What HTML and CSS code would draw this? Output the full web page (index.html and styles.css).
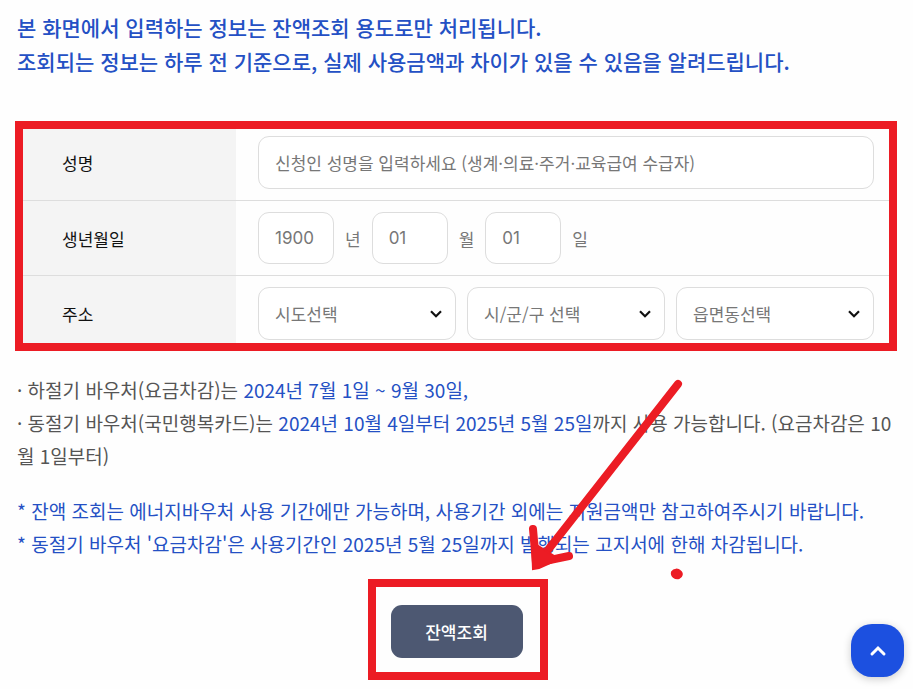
FILE: index.html
```
<!DOCTYPE html>
<html lang="ko">
<head>
    <meta charset="UTF-8">
    <meta name="viewport" content="width=device-width, initial-scale=1.0">
    <title>에너지바우처 잔액조회</title>
    <link rel="stylesheet" href="styles.css">
</head>
<body>
    <main>
        <p class="intro">
            본 화면에서 입력하는 정보는 잔액조회 용도로만 처리됩니다.<br>
            조회되는 정보는 하루 전 기준으로, 실제 사용금액과 차이가 있을 수 있음을 알려드립니다.
        </p>
        <form id="balance-form">
            <div class="mark form-mark">
                <table class="form-table">
                    <tbody>
                        <tr>
                            <th scope="row"><label for="name">성명</label></th>
                            <td><input type="text" id="name" placeholder="신청인 성명을 입력하세요 (생계·의료·주거·교육급여 수급자)"></td>
                        </tr>
                        <tr>
                            <th scope="row">생년월일</th>
                            <td>
                                <div class="birth">
                                    <input type="text" id="year" placeholder="1900">
                                    <label for="year">년</label>
                                    <input type="text" id="month" placeholder="01">
                                    <label for="month">월</label>
                                    <input type="text" id="day" placeholder="01">
                                    <label for="day">일</label>
                                </div>
                            </td>
                        </tr>
                        <tr>
                            <th scope="row">주소</th>
                            <td>
                                <div class="address">
                                    <div class="select-box">
                                        <select aria-label="시도"><option>시도선택</option></select>
                                        <svg viewBox="0 0 12 8"><path d="M1 1.3 6 6.3l5-5"/></svg>
                                    </div>
                                    <div class="select-box">
                                        <select aria-label="시/군/구"><option>시/군/구 선택</option></select>
                                        <svg viewBox="0 0 12 8"><path d="M1 1.3 6 6.3l5-5"/></svg>
                                    </div>
                                    <div class="select-box">
                                        <select aria-label="읍면동"><option>읍면동선택</option></select>
                                        <svg viewBox="0 0 12 8"><path d="M1 1.3 6 6.3l5-5"/></svg>
                                    </div>
                                </div>
                            </td>
                        </tr>
                    </tbody>
                </table>
            </div>
            <p class="note">
                · 하절기 바우처(요금차감)는 <span class="blue">2024년 7월 1일 ~ 9월 30일,</span><br>
                · 동절기 바우처(국민행복카드)는 <span class="blue">2024년 10월 4일부터 2025년 5월 25일</span>까지 사용 가능합니다. (요금차감은 10월 1일부터)
            </p>
            <p class="note blue">
                * 잔액 조회는 에너지바우처 사용 기간에만 가능하며, 사용기간 외에는 지원금액만 참고하여주시기 바랍니다.<br>
                * 동절기 바우처 '요금차감'은 사용기간인 2025년 5월 25일까지 발행되는 고지서에 한해 차감됩니다.
            </p>
            <div class="submit-area">
                <div class="mark submit-mark">
                    <button type="submit" class="submit">잔액조회</button>
                    <svg class="arrow" viewBox="0 0 170 210" aria-hidden="true">
                        <path d="M158 7 17 187M13 152l3 34 33-7"/>
                        <path class="tip" d="m12 165 1 27 6-1 20-9z"/>
                        <path class="dot" d="M152 195c2-3 6-3 8-1 3 2 2 6-1 7-4 1-8-2-7-6z"/>
                    </svg>
                </div>
            </div>
        </form>
    </main>
    <button type="button" class="top-btn" aria-label="맨 위로">
        <svg viewBox="0 0 18 12"><path d="m3 9 6-6 6 6"/></svg>
    </button>
    <script>
        document.getElementById("balance-form").addEventListener("submit", function (e) {
            e.preventDefault();
        });

        document.querySelector(".top-btn").addEventListener("click", function () {
            window.scrollTo({ top: 0, behavior: "smooth" });
        });
    </script>
</body>
</html>
```

FILE: styles.css
```
* {
    box-sizing: border-box;
}

body {
    margin: 0;
    background: #fefefe;
    color: #555;
    font-family: 'Noto Sans CJK KR', sans-serif;
    font-size: 17px;
}

main {
    padding: 10px 16px 9px 15px;
}

p {
    margin: 0;
    padding-left: 2px;
}

.intro {
    margin-bottom: 43px;
    color: #2450c4;
    font-size: 21px;
    font-weight: 500;
    line-height: 34px;
}

/* red highlight frames */
.mark {
    border: 8px solid #ec1c24;
}

.form-mark {
    margin-bottom: 22px;
}

.form-table {
    width: 100%;
    border-collapse: collapse;
    table-layout: fixed;
}

.form-table tr + tr {
    border-top: 1px solid #ddd;
}

.form-table th {
    width: 213px;
    padding: 11px 0 11px 39px;
    background: #f4f4f4;
    color: #111;
    font-weight: 400;
    text-align: left;
}

.form-table td {
    padding: 11px 15px 11px 22px;
}

.form-table tr:first-child > * {
    padding-top: 7px;
}

.form-table tr:last-child > * {
    padding-bottom: 3px;
}

input, select {
    display: block;
    width: 100%;
    height: 53px;
    padding: 0 16px;
    border: 1px solid #ddd;
    border-radius: 11px;
    background: #fff;
    color: #777;
    font-family: inherit;
    font-size: 17px;
}

input::placeholder {
    color: #777;
}

.birth {
    display: flex;
    align-items: center;
    gap: 11px;
    color: #777;
}

.birth input {
    width: 76px;
    height: 52px;
    padding-right: 8px;
    font-family: Inter, sans-serif;
}

.address {
    display: grid;
    grid-template-columns: repeat(3, 1fr);
    gap: 11px;
}

.select-box {
    display: grid;
    align-items: center;
}

.select-box select {
    grid-area: 1 / 1;
    appearance: none;
}

.select-box svg {
    grid-area: 1 / 1;
    justify-self: end;
    width: 12px;
    height: 8px;
    margin-right: 14px;
    fill: none;
    stroke: #111;
    stroke-width: 2.2;
    pointer-events: none;
}

.note {
    margin-bottom: 22px;
    font-size: 19px;
    line-height: 33px;
}

.blue {
    color: #2450c4;
}

.note.blue {
    margin-bottom: 19px;
}

.submit-area {
    padding-left: 3px;
}

.submit-mark {
    position: relative;
    width: fit-content;
    margin: 0 auto;
    padding: 18px 17px 14px 15px;
}

.submit {
    display: block;
    width: 132px;
    height: 53px;
    border: none;
    border-radius: 11px;
    background: #4d5872;
    color: #fff;
    font-family: inherit;
    font-size: 17px;
    font-weight: 500;
    cursor: pointer;
}

/* hand-drawn arrow pointing at the button */
.arrow {
    position: absolute;
    left: 144px;
    bottom: 85px;
    width: 170px;
    height: 210px;
    pointer-events: none;
}

.arrow path {
    fill: none;
    stroke: #ec1c24;
    stroke-width: 8;
    stroke-linecap: round;
    stroke-linejoin: miter;
}

.arrow .tip,
.arrow .dot {
    fill: #ec1c24;
    stroke-width: 2;
}

.top-btn {
    position: fixed;
    right: 9px;
    bottom: 12px;
    display: grid;
    place-items: center;
    width: 53px;
    height: 53px;
    padding: 0;
    border: none;
    border-radius: 21px;
    background: #1c50e0;
    box-shadow: 0 2px 8px rgba(0, 0, 0, 0.2);
    cursor: pointer;
}

.top-btn svg {
    width: 18px;
    height: 12px;
    fill: none;
    stroke: #fff;
    stroke-width: 3;
    stroke-linecap: round;
}
```
